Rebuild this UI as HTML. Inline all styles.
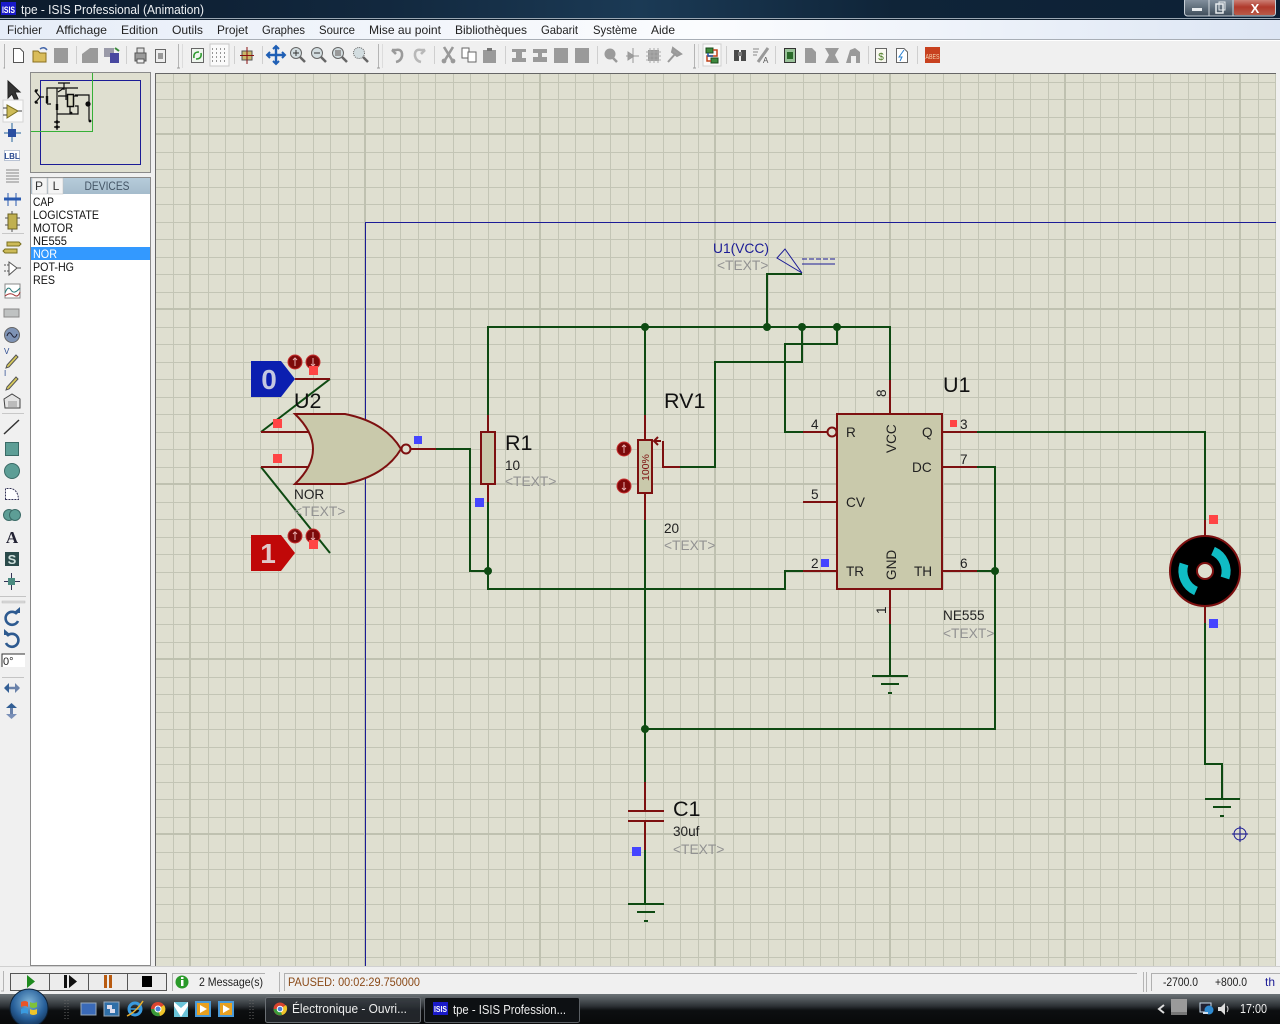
<!DOCTYPE html>
<html><head><meta charset="utf-8"><title>tpe - ISIS Professional (Animation)</title>
<style>
html,body{margin:0;padding:0;width:1280px;height:1024px;overflow:hidden;background:#f0f0f0}
svg{display:block;position:absolute;left:0;top:0}
text{font-family:"Liberation Sans",sans-serif}
.w{fill:none;stroke:#0e4a12;stroke-width:2}
.p{fill:none;stroke:#7d1010;stroke-width:2}
.b{fill:#c9c9ab;stroke:#7d1010;stroke-width:2}
.big{font-size:21.5px;fill:#111}
.m{font-size:13.6px;fill:#222}
.t{font-size:13.8px;fill:#929292}
.pn{font-size:13.6px;fill:#222}
.menu{font-size:12px;fill:#222}
.list{font-size:12px;fill:#111}
.g{fill:#9a9a9a}
</style></head><body>
<svg width="1280" height="1024" viewBox="0 0 1280 1024" xmlns="http://www.w3.org/2000/svg">
<defs>
<pattern id="grid" patternUnits="userSpaceOnUse" x="189" y="133" width="175" height="175">
<path d="M19.5 0V175M36.5 0V175M54.5 0V175M71.5 0V175M89.5 0V175M106.5 0V175M124.5 0V175M141.5 0V175M159.5 0V175M0 19.5H175M0 36.5H175M0 54.5H175M0 71.5H175M0 89.5H175M0 106.5H175M0 124.5H175M0 141.5H175M0 159.5H175" stroke="#c3c5b5" stroke-width="1" fill="none"/>
<path d="M1 0V175M0 1H175" stroke="#bfc1b0" stroke-width="2" fill="none"/>
</pattern>
<linearGradient id="tb" x1="0" x2="1" y1="0" y2="0"><stop offset="0" stop-color="#0b1a2c"/><stop offset=".3" stop-color="#12283e"/><stop offset=".5" stop-color="#1b3a55"/><stop offset=".7" stop-color="#0f2438"/><stop offset="1" stop-color="#0c2035"/></linearGradient>
<linearGradient id="mb" x1="0" x2="1" y1="0" y2="0"><stop offset="0" stop-color="#e6edf8"/><stop offset=".55" stop-color="#fbfcfe"/><stop offset="1" stop-color="#dde6f4"/></linearGradient>
<linearGradient id="task" x1="0" x2="0" y1="0" y2="1"><stop offset="0" stop-color="#6d7478"/><stop offset=".4" stop-color="#2d3236"/><stop offset=".55" stop-color="#0d0f11"/><stop offset="1" stop-color="#08090a"/></linearGradient>
<linearGradient id="close" x1="0" x2="0" y1="0" y2="1"><stop offset="0" stop-color="#d08a80"/><stop offset=".5" stop-color="#b03a2c"/><stop offset="1" stop-color="#b85a48"/></linearGradient>
<linearGradient id="ctl" x1="0" x2="0" y1="0" y2="1"><stop offset="0" stop-color="#8a97a4"/><stop offset="1" stop-color="#3d4c5a"/></linearGradient>
<radialGradient id="orb" cx=".5" cy=".35" r=".7"><stop offset="0" stop-color="#7fb4d8"/><stop offset=".6" stop-color="#28609a"/><stop offset="1" stop-color="#0f2a4a"/></radialGradient>
<linearGradient id="dev" x1="0" x2="0" y1="0" y2="1"><stop offset="0" stop-color="#b6cbda"/><stop offset="1" stop-color="#a5bccc"/></linearGradient>
</defs>

<!-- base -->
<rect width="1280" height="1024" fill="#f0f0f0"/>

<!-- title bar -->
<rect width="1280" height="18" fill="url(#tb)"/>
<rect y="18" width="1280" height="1" fill="#9aa7b3"/>
<rect y="19" width="1280" height="1" fill="#10202f"/>
<rect x="1" y="2" width="15" height="13" fill="#1a1ac8"/>
<text x="2" y="13" font-size="9" fill="#fff" font-weight="bold" textLength="13" lengthAdjust="spacingAndGlyphs">ISIS</text>
<text x="21" y="14" font-size="12.5" fill="#eef1f4" textLength="183" lengthAdjust="spacingAndGlyphs">tpe - ISIS Professional (Animation)</text>
<rect x="1184.5" y="-2" width="91" height="18" rx="3" fill="url(#ctl)" stroke="#c6ced6"/>
<rect x="1234" y="-1" width="41" height="16" rx="2" fill="url(#close)"/>
<path d="M1209 0V16M1233 0V16" stroke="#d0d6dc"/>
<rect x="1192" y="8" width="10" height="3" fill="#e8ecef"/>
<rect x="1216" y="4" width="7" height="9" fill="none" stroke="#e8ecef" stroke-width="1.5"/><rect x="1219" y="2" width="6" height="8" fill="none" stroke="#e8ecef"/>
<text x="1255" y="13" font-size="13" font-weight="bold" fill="#fff" text-anchor="middle">X</text>

<!-- menu -->
<rect y="20" width="1280" height="19" fill="url(#mb)"/>
<rect y="39" width="1280" height="1" fill="#a8aeb6"/>
<rect y="40" width="1280" height="1" fill="#fff"/>
<g class="menu">
<text class="menu" x="7" y="34" textLength="35" lengthAdjust="spacingAndGlyphs">Fichier</text>
<text class="menu" x="56" y="34" textLength="51" lengthAdjust="spacingAndGlyphs">Affichage</text>
<text class="menu" x="121" y="34" textLength="37" lengthAdjust="spacingAndGlyphs">Edition</text>
<text class="menu" x="172" y="34" textLength="31" lengthAdjust="spacingAndGlyphs">Outils</text>
<text class="menu" x="217" y="34" textLength="31" lengthAdjust="spacingAndGlyphs">Projet</text>
<text class="menu" x="262" y="34" textLength="43" lengthAdjust="spacingAndGlyphs">Graphes</text>
<text class="menu" x="319" y="34" textLength="36" lengthAdjust="spacingAndGlyphs">Source</text>
<text class="menu" x="369" y="34" textLength="72" lengthAdjust="spacingAndGlyphs">Mise au point</text>
<text class="menu" x="455" y="34" textLength="72" lengthAdjust="spacingAndGlyphs">Bibliothèques</text>
<text class="menu" x="541" y="34" textLength="37" lengthAdjust="spacingAndGlyphs">Gabarit</text>
<text class="menu" x="593" y="34" textLength="44" lengthAdjust="spacingAndGlyphs">Système</text>
<text class="menu" x="651" y="34" textLength="24" lengthAdjust="spacingAndGlyphs">Aide</text>
</g>

<!-- toolbar -->
<g id="toolbar">
<path d="M4.5 44V68M178.5 44V68M378.5 44V68M694.5 44V68" stroke="#b5b5b5" fill="none"/>
<path d="M182.5 44V68M382.5 44V68M698.5 44V68" stroke="#dcdcdc" fill="none"/>
<path d="M3.5 68H5M177 68H180M377 68H380M693 68H696" stroke="#999"/>
<path d="M76.5 46V64M126.5 46V64M234.5 46V64M262.5 46V64M434.5 46V64M505.5 46V64M597.5 46V64M726.5 46V64M775.5 46V64M868.5 46V64M917.5 46V64" stroke="#cfcfcf"/>
<path d="M13.5 48.5H20L23.5 52V62.5H13.5Z" fill="#fff" stroke="#555"/>
<path d="M33 51H38L40 53H46V62H33Z" fill="#d9bc5a" stroke="#8a7020"/><path d="M40 49Q44 46 47 50" fill="none" stroke="#4466aa" stroke-width="1.5"/>
<rect x="54" y="48" width="14" height="15" class="g"/>
<path d="M82 54L90 48H98V63H82Z" class="g"/>
<rect x="104" y="48" width="10" height="9" fill="#9a9aa8"/><rect x="110" y="53" width="9" height="10" fill="#4848a0"/><path d="M115 48L119 51" stroke="#3a8a3a" stroke-width="2"/>
<path d="M135 53H146V61H135Z" fill="#9a9a9a" stroke="#555"/><rect x="137" y="48" width="7" height="5" fill="#ddd" stroke="#555"/><rect x="137" y="59" width="7" height="4" fill="#eee" stroke="#555"/>
<path d="M155.5 49.5H165.5V62.5H155.5Z" fill="#eee" stroke="#666"/><rect x="158" y="53" width="5" height="6" fill="#999"/>
<rect x="191.5" y="48.5" width="12" height="14" fill="#eef6ee" stroke="#666"/><path d="M194 58Q193 52 199 52M201 53Q202 59 196 59" fill="none" stroke="#2d9a2d" stroke-width="1.6"/>
<rect x="210" y="44" width="19" height="22" fill="#fafafa" stroke="#c8c8c8"/>
<path d="M212 49H227M212 53H227M212 57H227M212 61H227" stroke="#333" stroke-width="1" stroke-dasharray="1 3"/>
<rect x="242" y="51" width="10" height="9" fill="#c9b86a" stroke="#555"/><path d="M247 47V64M240 55.5H254" stroke="#8a1010"/>
<path d="M276 47V63M268 55H284" stroke="#1f5fb5" stroke-width="2.4"/><path d="M273 49L276 46L279 49M273 61L276 64L279 61M270 52L267 55L270 58M282 52L285 55L282 58" fill="none" stroke="#1f5fb5" stroke-width="2"/>
<g fill="#d3dde0" stroke="#666"><circle cx="296" cy="53" r="5.5"/><circle cx="317" cy="53" r="5.5"/><circle cx="338" cy="53" r="5.5"/><circle cx="359" cy="53" r="5.5" stroke-dasharray="1 1"/></g>
<path d="M300 57L305 62M321 57L326 62M342 57L347 62M363 57L368 62" stroke="#666" stroke-width="2.5"/>
<path d="M293 53H299M296 50V56M314 53H320" stroke="#333"/>
<rect x="335" y="50" width="6" height="6" fill="#999"/>
<path d="M392 50L396 54M392 50H397M392 51Q403 47 402 56Q401 61 396 62" fill="none" stroke="#9a9a9a" stroke-width="2.6"/>
<path d="M425 50L421 54M425 50H420M425 51Q414 47 415 56Q416 61 421 62" fill="none" stroke="#b8b8b8" stroke-width="2.6"/>
<path d="M444 47L452 60M453 47L445 60" stroke="#999" stroke-width="2.6"/><circle cx="444" cy="61" r="2.4" class="g"/><circle cx="453" cy="61" r="2.4" class="g"/>
<rect x="462" y="48" width="7" height="10" fill="#fff" stroke="#666"/><rect x="468" y="52" width="8" height="10" fill="#fff" stroke="#666"/>
<rect x="483" y="50" width="13" height="13" class="g"/><rect x="487" y="48" width="5" height="3" fill="#777"/>
<path d="M512 49H526V52H522V58H526V62H512V58H516V52H512Z" class="g"/>
<path d="M533 49H547V53H542V57H547V62H533V57H538V53H533Z" class="g"/>
<rect x="554" y="48" width="14" height="15" class="g"/><rect x="575" y="48" width="14" height="15" class="g"/>
<circle cx="610" cy="54" r="5.5" class="g"/><path d="M613 58L617 62" stroke="#999" stroke-width="2.5"/>
<path d="M626 56H639M633 48V63M628 52L634 56L628 60Z" fill="#a0a0a0" stroke="#999"/>
<rect x="648" y="50" width="11" height="11" class="g"/><path d="M646 52H661M646 56H661M646 60H661M650 48V63M654 48V63M658 48V63" stroke="#aaa"/>
<path d="M668 62L676 53M673 48L681 54L677 56L672 52Z" fill="#a0a0a0" stroke="#999" stroke-width="2"/>
<rect x="703" y="44" width="18" height="22" fill="#fafafa" stroke="#d0d0d0"/>
<rect x="706" y="48" width="7" height="5" fill="#3d8a3d" stroke="#1a4a1a"/><rect x="711" y="58" width="7" height="5" fill="#3d8a3d" stroke="#1a4a1a"/><path d="M713 50H717V56H707V61H711" fill="none" stroke="#c0421a" stroke-width="1.5"/><path d="M708 53V56H713" fill="none" stroke="#2255aa" stroke-width="1.5"/>
<rect x="734" y="50" width="5" height="11" fill="#4a4a4a"/><rect x="741" y="50" width="5" height="11" fill="#4a4a4a"/><rect x="738" y="52" width="4" height="4" fill="#777"/>
<path d="M753 49H759M753 52H758M753 55H757" stroke="#888"/><path d="M768 48L758 62" stroke="#999" stroke-width="3"/><text x="763" y="63" font-size="8" fill="#555">A</text>
<rect x="784.5" y="48.5" width="11" height="14" fill="#9ac29a" stroke="#333"/><rect x="787" y="52" width="6" height="7" fill="#2a6a2a"/>
<path d="M805 48H812L816 52V63H805Z" class="g"/>
<path d="M825 48H839L835 55L839 63H825L829 55Z" class="g"/>
<path d="M846 63L850 50L855 48L860 52L860 63H856V56H851V63Z" class="g"/>
<rect x="875.5" y="48.5" width="11" height="14" fill="#f8f8f0" stroke="#666"/><text x="881" y="60" font-size="10" fill="#4a7a20" text-anchor="middle">$</text>
<path d="M896.5 48.5H904L907.5 52V62.5H896.5Z" fill="#fff" stroke="#666"/><path d="M904 50L899 57H902L900 61" fill="none" stroke="#2a80d0"/>
<rect x="925" y="47" width="15" height="16" fill="#c8411f"/><text x="932.5" y="59" font-size="7" fill="#f5d5b0" text-anchor="middle" textLength="14" lengthAdjust="spacingAndGlyphs">ABES</text>
</g>

<!-- left toolbar -->
<g id="lefttool">
<path d="M8 81V98L12 94L15 101L18 99L15 92L20 92Z" fill="#333" stroke="#222"/>
<rect x="3" y="100" width="20" height="22" fill="#fafafa" stroke="#d4d4d4"/>
<path d="M7 105L18 111L7 118Z" fill="#cdbb58" stroke="#7a7020"/><path d="M3 108H7M3 115H7M18 111H22" stroke="#444"/>
<path d="M12 123V142M4 133H21" stroke="#1f5f9a"/><rect x="8" y="129" width="8" height="8" fill="#2a4ea0"/>
<rect x="4.5" y="150.5" width="15" height="10" fill="#fff" stroke="#7a8fb0" stroke-dasharray="1 1"/><text x="12" y="159" font-size="8" fill="#2a4a90" text-anchor="middle" font-weight="bold">LBL</text>
<path d="M6 170H19M6 173H19M6 176H19M6 179H19M6 182H19" stroke="#888"/>
<path d="M4 199H21" stroke="#2a5ab0" stroke-width="3"/><path d="M8 193V206M16 193V206" stroke="#2a5ab0"/>
<rect x="8" y="214" width="9" height="15" fill="#c0b050" stroke="#6a6020"/><path d="M5 218H8M5 225H8M17 218H20M17 225H20M12 211V214M12 229V232" stroke="#555"/>
<path d="M2 233.5H24" stroke="#c8c8c8"/>
<path d="M7 242H19L21 244L19 246H7Z" fill="#cdbb58" stroke="#7a7020"/><path d="M5 249H17L17 253H5L3 251Z" fill="#cdbb58" stroke="#7a7020"/>
<path d="M9 262L17 268L9 275Z" fill="#fff" stroke="#555"/><path d="M4 265H9M4 271H9" stroke="#555" stroke-dasharray="2 1"/><path d="M17 268H21" stroke="#555"/>
<rect x="5" y="284" width="15" height="14" fill="#fff" stroke="#888"/><path d="M5 293Q8 285 11 290T20 288" fill="none" stroke="#2a7a7a"/><path d="M5 296Q10 292 14 295T20 292" fill="none" stroke="#a03030"/>
<rect x="4" y="309" width="15" height="8" fill="#bfc2c2" stroke="#888"/>
<circle cx="12" cy="335" r="7.5" fill="#7e93b5" stroke="#666"/><path d="M7 336Q9 330 12 335T17 334" fill="none" stroke="#223" />
<path d="M7 365L16 355L18 357L9 367L6 368Z" fill="#d6c85a" stroke="#555"/><text x="4" y="354" font-size="8" fill="#2a4a90">V</text>
<path d="M7 387L16 377L18 379L9 389L6 390Z" fill="#d6c85a" stroke="#555"/><text x="4" y="376" font-size="8" fill="#2a4a90">I</text>
<path d="M4 399L12 394L20 399V408H5Z" fill="#e4e4e4" stroke="#444"/><rect x="8" y="401" width="9" height="6" fill="#bbb"/>
<path d="M2 413.5H24" stroke="#c8c8c8"/>
<path d="M4 434L19 420" stroke="#333" stroke-width="1.5"/>
<rect x="5.5" y="442.5" width="13" height="13" fill="#5d9e96" stroke="#3a6a66"/>
<circle cx="12" cy="471" r="7.5" fill="#5d9e96" stroke="#3a6a66"/>
<path d="M5.5 499.5V488.5H11Q18 490 18.5 499.5Z" fill="#fff" stroke="#335" stroke-dasharray="2 1"/>
<circle cx="9" cy="515" r="5.5" fill="#5d9e96" stroke="#3a6a66"/><circle cx="15" cy="515" r="5.5" fill="#5d9e96" stroke="#3a6a66"/>
<text x="12" y="543" font-size="17" font-weight="bold" fill="#223" text-anchor="middle" style="font-family:'Liberation Serif',serif">A</text>
<rect x="5" y="552" width="14" height="14" fill="#2a4a4a"/><text x="12" y="564" font-size="13" font-weight="bold" fill="#cfe0dc" text-anchor="middle">S</text>
<path d="M11.5 573V590M4 581.5H20" stroke="#335"/><rect x="8" y="578" width="7" height="7" fill="#4a8a80"/>
<path d="M0 596.5H26" stroke="#c4c4c4"/><rect x="2" y="601" width="23" height="2" fill="#dadada" stroke="#bbb" stroke-width=".5"/>
<path d="M17 614A6.5 6.5 0 1 0 18 621" fill="none" stroke="#2d5a90" stroke-width="2.6"/><path d="M13 613H20V607Z" fill="#2d5a90"/>
<path d="M7 636A6.5 6.5 0 1 1 6 643" fill="none" stroke="#2d5a90" stroke-width="2.6"/><path d="M11 635H4V629Z" fill="#2d5a90"/>
<rect x="2" y="654" width="23" height="13" fill="#fff"/><path d="M2 667V654H25" fill="none" stroke="#333"/>
<text x="3" y="665" font-size="11" fill="#222">0°</text>
<path d="M2 677.5H24" stroke="#c4c4c4"/>
<path d="M5 688H19" stroke="#6a82aa" stroke-width="2.5"/><path d="M9 683L4 688L9 693Z" fill="#335f95"/><path d="M15 683L20 688L15 693Z" fill="#6a82aa"/>
<path d="M11.5 705V717" stroke="#6a82aa" stroke-width="3"/><path d="M6 708L11.5 703L17 708Z" fill="#335f95"/><path d="M6 714L11.5 719L17 714Z" fill="#7a90b8"/>
</g>
<rect x="30.5" y="72.5" width="120" height="100" fill="#dfdfd0" stroke="#8a8a8a"/>
<rect x="40.5" y="80.5" width="100" height="84" fill="none" stroke="#1c1c96"/>
<path d="M92.5 73V131.5H31" fill="none" stroke="#36b036"/>
<!-- preview mini schematic -->
<g fill="none" stroke="#0c0c0c" stroke-width="1.2">
<path d="M47 104V88H78M57 88V130M64 83V90M58 83H70M47 104H51M64 88L58 92M58 96H78M66 88V100"/>
<rect x="67.5" y="94.5" width="6" height="12" fill="#d8d8c0" stroke-width="1.5"/>
<path d="M75 95H89V120L90 122M70 107V114M75 106H78V114H57"/>
<path d="M35 91L40 97H44M35 103L40 97M35 90H38M35 103H38"/>
<path d="M54 122H60M54 127H60"/>
<path d="M57 104V110" stroke-width="2.4"/><path d="M47 96V103" stroke-width="2.4"/>
</g>
<g fill="#0c0c0c"><circle cx="88" cy="104" r="2.6"/><circle cx="57" cy="122" r="1.6"/><circle cx="57" cy="127" r="1.6"/><circle cx="71" cy="113" r="1.4"/><circle cx="90" cy="121" r="1.4"/><circle cx="36" cy="91" r="1.4"/><circle cx="36" cy="102" r="1.4"/></g>
<rect x="30.5" y="177.5" width="120" height="788" fill="#fff" stroke="#8a8a8a"/>
<rect x="31" y="178" width="119" height="16" fill="url(#dev)"/>
<rect x="32" y="178" width="15" height="16" fill="#f4f4f4" stroke="#bbb" stroke-width=".5"/>
<rect x="48" y="178" width="15" height="16" fill="#f4f4f4" stroke="#bbb" stroke-width=".5"/>
<text x="39" y="190" font-size="12" fill="#333" text-anchor="middle">P</text>
<text x="56" y="190" font-size="12" fill="#333" text-anchor="middle">L</text>
<text x="107" y="190" font-size="11.5" fill="#445566" text-anchor="middle" textLength="45" lengthAdjust="spacingAndGlyphs">DEVICES</text>
<rect x="31" y="247" width="119" height="13" fill="#3399ff"/>
<text class="list" x="33" y="206" textLength="21" lengthAdjust="spacingAndGlyphs">CAP</text>
<text class="list" x="33" y="219" textLength="66" lengthAdjust="spacingAndGlyphs">LOGICSTATE</text>
<text class="list" x="33" y="232" textLength="40" lengthAdjust="spacingAndGlyphs">MOTOR</text>
<text class="list" x="33" y="245" textLength="34" lengthAdjust="spacingAndGlyphs">NE555</text>
<text class="list" x="33" y="258" textLength="24" lengthAdjust="spacingAndGlyphs" style="fill:#fff">NOR</text>
<text class="list" x="33" y="271" textLength="41" lengthAdjust="spacingAndGlyphs">POT-HG</text>
<text class="list" x="33" y="284" textLength="22" lengthAdjust="spacingAndGlyphs">RES</text>

<!-- canvas -->
<rect x="155" y="73" width="1121" height="893" fill="#dfdfd0"/>
<rect x="155" y="73" width="1121" height="893" fill="url(#grid)"/>
<path d="M155.5 966V73.5H1276" fill="none" stroke="#666"/>
<path d="M365.5 966V222.5H1276" fill="none" stroke="#1c1c96"/>

<!-- wires -->
<g class="w">
<path class="w" d="M488 415V327H890V380"/>
<path class="w" d="M488 502V589H785V571H803"/>
<path class="w" d="M436 449H470V571H488"/>
<path class="w" d="M645 415V327M645 520V782M645 850V904"/>
<path class="w" d="M767 327V274H802"/>
<path class="w" d="M802 327V362H715V467H680"/>
<path class="w" d="M837 327V344H785V432H803"/>
<path class="w" d="M977 432H1205V520M1205 623V764H1222V799"/>
<path class="w" d="M977 467H995V729H645"/>
<path class="w" d="M977 571H995"/>
<path class="w" d="M890 624V676"/>
<path class="w" d="M330 379L261 432M261 467L330 553"/>
<path class="w" d="M628 904H664M637 912H655M644 921H648"/>
<path class="w" d="M872 676H908M881 684H899M888 693H892"/>
<path class="w" d="M1205 799H1240M1213 807H1231M1220 816H1224"/>
</g>
<g fill="#0e4a12">
<circle cx="645" cy="327" r="4"/><circle cx="767" cy="327" r="4"/><circle cx="802" cy="327" r="4"/><circle cx="837" cy="327" r="4"/>
<circle cx="488" cy="571" r="4"/><circle cx="995" cy="571" r="4"/><circle cx="645" cy="729" r="4"/>
</g>

<!-- pins/components -->
<path class="p" d="M488 415V432M488 484V502M645 415V440M645 493V520M680 467H663V441M890 380V414M890 589V624M803 432H827M803 502H837M803 571H837M942 432H977M942 467H977M942 571H977M295 379H330M261 432H315M261 467H315M411 449H436M1205 520V536M1205 606V623M645 782V811M645 821V850M628 811H664M628 821H664"/>
<path d="M655 441H661M658 437L654 441L658 445" fill="none" stroke="#7d1010" stroke-width="2"/>
<rect class="b" x="481" y="432" width="14" height="52"/>
<rect class="b" x="638" y="440" width="14" height="53"/>
<text x="649" y="481" font-size="10.5" fill="#7d1010" transform="rotate(-90 649 481)">100%</text>
<rect class="b" x="837" y="414" width="105" height="175" stroke-width="2.4"/>
<circle cx="832" cy="432" r="4.5" fill="#dfdfd0" stroke="#7d1010" stroke-width="2"/>

<!-- NOR gate -->
<path class="b" d="M295 414H345Q385 422 401 449Q385 476 345 484H295Q331 449 295 414Z"/>
<circle cx="406" cy="449" r="4.5" fill="#dfdfd0" stroke="#7d1010" stroke-width="2"/>

<!-- logic states -->
<path d="M251 361H281L295 379L281 397H251Z" fill="#0b1fb0"/>
<text x="269" y="389" font-size="28" font-weight="bold" fill="#c4c8e0" text-anchor="middle">0</text>
<path d="M251 535H281L295 553L281 571H251Z" fill="#c00808"/>
<text x="268" y="563" font-size="28" font-weight="bold" fill="#e0c8c8" text-anchor="middle">1</text>
<g fill="#7d0a0a" stroke="#c83030" stroke-width="1">
<circle cx="295" cy="362" r="7"/><circle cx="313" cy="362" r="7"/><circle cx="295" cy="536" r="7"/><circle cx="313" cy="536" r="7"/><circle cx="624" cy="449" r="7"/><circle cx="624" cy="486" r="7"/>
</g>
<path d="M295 366V358M293 360L295 358L297 360M313 358V366M311 364L313 366L315 364M295 540V532M293 534L295 532L297 534M313 532V540M311 538L313 540L315 538M624 453V445M622 447L624 445L626 447M624 482V490M622 488L624 490L626 488" fill="none" stroke="#e8b0b0" stroke-width="1"/>

<!-- probe -->
<path d="M777 258L785 249L802 273Z" fill="none" stroke="#1c1c96"/>
<path d="M802 259H835" stroke="#1c1c96" stroke-dasharray="5 2"/><path d="M802 264H835" stroke="#1c1c96"/>

<!-- motor -->
<circle cx="1205" cy="571" r="35" fill="#000" stroke="#7d1010" stroke-width="2"/>
<path d="M1213 551A22 22 0 0 1 1225 578M1184 564A22 22 0 0 0 1196 591" fill="none" stroke="#10bcc4" stroke-width="9"/>
<circle cx="1205" cy="571" r="8" fill="#dfdfd0" stroke="#7d1010" stroke-width="2"/>

<!-- squares -->
<g fill="#ff4545">
<rect x="309" y="366" width="9" height="9"/><rect x="273" y="419" width="9" height="9"/><rect x="273" y="454" width="9" height="9"/><rect x="309" y="540" width="9" height="9"/><rect x="950" y="420" width="7" height="7"/><rect x="1209" y="515" width="9" height="9"/>
</g>
<g fill="#4545ff">
<rect x="414" y="436" width="8" height="8"/><rect x="475" y="498" width="9" height="9"/><rect x="821" y="559" width="8" height="8"/><rect x="632" y="847" width="9" height="9"/><rect x="1209" y="619" width="9" height="9"/>
</g>
<circle cx="1240" cy="834" r="6" fill="none" stroke="#1c1c96"/><path d="M1240 826V842M1232 834H1248" stroke="#1c1c96"/>

<!-- schematic text -->
<text class="big" x="294" y="408">U2</text>
<text class="big" x="505" y="450">R1</text>
<text class="m" x="505" y="470">10</text>
<text class="t" x="505" y="486">&lt;TEXT&gt;</text>
<text class="m" x="294" y="499">NOR</text>
<text class="t" x="294" y="516">&lt;TEXT&gt;</text>
<text class="big" x="664" y="408">RV1</text>
<text class="m" x="664" y="533">20</text>
<text class="t" x="664" y="550">&lt;TEXT&gt;</text>
<text class="big" x="673" y="816">C1</text>
<text class="m" x="673" y="836">30uf</text>
<text class="t" x="673" y="854">&lt;TEXT&gt;</text>
<text x="713" y="253" font-size="13.8" fill="#1c1c96">U1(VCC)</text>
<text class="t" x="717" y="270">&lt;TEXT&gt;</text>
<text class="big" x="943" y="392">U1</text>
<text class="m" x="943" y="620">NE555</text>
<text class="t" x="943" y="638">&lt;TEXT&gt;</text>
<text class="pn" x="846" y="437">R</text>
<text class="pn" x="922" y="437">Q</text>
<text class="pn" x="912" y="472">DC</text>
<text class="pn" x="846" y="507">CV</text>
<text class="pn" x="846" y="576">TR</text>
<text class="pn" x="914" y="576">TH</text>
<text class="pn" x="896" y="453" transform="rotate(-90 896 453)">VCC</text>
<text class="pn" x="896" y="580" transform="rotate(-90 896 580)">GND</text>
<text class="pn" x="811" y="429">4</text>
<text class="pn" x="811" y="499">5</text>
<text class="pn" x="811" y="568">2</text>
<text class="pn" x="960" y="429">3</text>
<text class="pn" x="960" y="464">7</text>
<text class="pn" x="960" y="568">6</text>
<text class="pn" x="886" y="397" transform="rotate(-90 886 397)">8</text>
<text class="pn" x="886" y="614" transform="rotate(-90 886 614)">1</text>

<!-- status bar -->
<rect y="966" width="1280" height="28" fill="#f0f0f0"/>
<path d="M0 966.5H1280" stroke="#d0d0d0"/>
<path d="M3.5 971V991H1" fill="none" stroke="#b5b5b5"/>
<g fill="#ececec" stroke="#555"><rect x="10.5" y="973.5" width="39" height="17"/><rect x="49.5" y="973.5" width="39" height="17"/><rect x="88.5" y="973.5" width="39" height="17"/><rect x="127.5" y="973.5" width="39" height="17"/></g>
<path d="M27 975V988L35 981.5Z" fill="#1e8a1e"/>
<rect x="64" y="975" width="3" height="13" fill="#111"/><path d="M69 975V988L77 981.5Z" fill="#111"/>
<rect x="104" y="975" width="3" height="13" fill="#b85a10"/><rect x="109" y="975" width="3" height="13" fill="#b85a10"/>
<rect x="142" y="976" width="10" height="11" fill="#000"/>
<path d="M172.5 991V973.5H265" fill="none" stroke="#b0b0b0"/>
<circle cx="182" cy="982" r="6.5" fill="#2a9a2a"/><rect x="181" y="980" width="2.5" height="6" fill="#fff"/><rect x="181" y="977" width="2.5" height="2" fill="#fff"/>
<text x="199" y="986" font-size="12" fill="#222" textLength="64" lengthAdjust="spacingAndGlyphs">2 Message(s)</text>
<path d="M279.5 972V992" stroke="#b5b5b5"/>
<path d="M284.5 991V973.5H1137" fill="none" stroke="#b0b0b0"/>
<text x="288" y="986" font-size="12" fill="#8a4a18" textLength="132" lengthAdjust="spacingAndGlyphs">PAUSED: 00:02:29.750000</text>
<path d="M1143.5 972V992M1146.5 972V992" stroke="#b5b5b5"/>
<path d="M1151.5 991V973.5H1280" fill="none" stroke="#b0b0b0"/>
<text x="1163" y="986" font-size="12" fill="#222" textLength="35" lengthAdjust="spacingAndGlyphs">-2700.0</text>
<text x="1215" y="986" font-size="12" fill="#222" textLength="32" lengthAdjust="spacingAndGlyphs">+800.0</text>
<text x="1265" y="986" font-size="12" fill="#1c1c96">th</text>

<!-- taskbar -->
<rect y="994" width="1280" height="30" fill="url(#task)"/>
<circle cx="29" cy="1008" r="19" fill="url(#orb)" stroke="#0c1f33"/>
<path d="M21 1002Q25 1000 28 1002V1007Q25 1005 21 1007Z" fill="#e8552a"/>
<path d="M30 1002Q33 1004 37 1002V1007Q33 1009 30 1007Z" fill="#7fc23a"/>
<path d="M21 1009Q25 1007 28 1009V1014Q25 1012 21 1014Z" fill="#3a9adf"/>
<path d="M30 1009Q33 1011 37 1009V1014Q33 1016 30 1014Z" fill="#f0c52a"/>
<path d="M65 1000V1020M68 1000V1020M250 1000V1020M253 1000V1020" stroke="#666" stroke-dasharray="1 2"/>
<rect x="81" y="1003" width="15" height="12" fill="#3a6ab8" stroke="#9ab"/>
<rect x="104" y="1002" width="15" height="14" fill="#2f6fa8" stroke="#9ab"/><rect x="107" y="1005" width="5" height="4" fill="#dde"/><rect x="110" y="1009" width="5" height="4" fill="#dde"/>
<circle cx="135" cy="1009" r="6" fill="none" stroke="#3a9adf" stroke-width="3"/><path d="M128 1009H141" stroke="#3a9adf" stroke-width="1.5"/><path d="M127 1016Q136 1012 143 1001" fill="none" stroke="#e8b030" stroke-width="1.5"/>
<circle cx="158" cy="1009" r="7" fill="#d9442f"/><path d="M158 1009L164 1005A7 7 0 0 1 160 1016Z" fill="#f0c52a"/><path d="M158 1009L160 1016A7 7 0 0 1 151 1009Z" fill="#3a9a3a"/><circle cx="158" cy="1009" r="3" fill="#4a80d8" stroke="#fff"/>
<rect x="174" y="1002" width="14" height="15" fill="#6ac3d8"/><path d="M174 1002L181 1008L188 1002V1006L181 1017L174 1006Z" fill="#fff"/>
<rect x="196" y="1002" width="14" height="14" fill="#e8a020" stroke="#4a9ad8" stroke-width="2"/><path d="M200 1005V1013L207 1009Z" fill="#fff"/>
<rect x="219" y="1002" width="14" height="14" fill="#e8a020" stroke="#4a9ad8" stroke-width="2"/><path d="M223 1005V1013L230 1009Z" fill="#fff"/>

<rect x="265.5" y="997.5" width="155" height="25" rx="2" fill="#2c3136" fill-opacity=".7" stroke="#6a6f74"/>
<circle cx="280" cy="1009" r="6.5" fill="#d9442f"/><path d="M280 1009L286 1005A6.5 6.5 0 0 1 282 1015Z" fill="#f0c52a"/><path d="M280 1009L282 1015A6.5 6.5 0 0 1 273.5 1009Z" fill="#3a9a3a"/><circle cx="280" cy="1009" r="2.8" fill="#4a80d8" stroke="#fff"/>
<text x="292" y="1013" font-size="12.5" fill="#eee" textLength="115" lengthAdjust="spacingAndGlyphs">Électronique - Ouvri...</text>
<rect x="424.5" y="997.5" width="155" height="25" rx="2" fill="#0d1013" stroke="#5a5f64"/>
<rect x="433" y="1002" width="15" height="13" fill="#1a1ac8"/>
<text x="434" y="1012" font-size="8.5" fill="#fff" font-weight="bold" textLength="13" lengthAdjust="spacingAndGlyphs">ISIS</text>
<text x="453" y="1014" font-size="12.5" fill="#eee" textLength="113" lengthAdjust="spacingAndGlyphs">tpe - ISIS Profession...</text>

<path d="M1164 1005L1159 1009L1164 1013" fill="none" stroke="#ddd" stroke-width="2"/>
<rect x="1171" y="999" width="16" height="16" fill="#9a9a9a"/><rect x="1171" y="1012" width="16" height="3" fill="#777"/>
<rect x="1200" y="1003" width="11" height="9" fill="#223" stroke="#cde"/><circle cx="1209" cy="1010" r="4.5" fill="#2f8ad0"/><rect x="1203" y="1012" width="5" height="2" fill="#cde"/>
<path d="M1218 1007H1221L1225 1003V1015L1221 1011H1218Z" fill="#ddd"/><path d="M1227 1006Q1229 1009 1227 1012" fill="none" stroke="#ddd"/>
<text x="1240" y="1013" font-size="12.5" fill="#eee" textLength="27" lengthAdjust="spacingAndGlyphs">17:00</text>
</svg>
</body></html>
